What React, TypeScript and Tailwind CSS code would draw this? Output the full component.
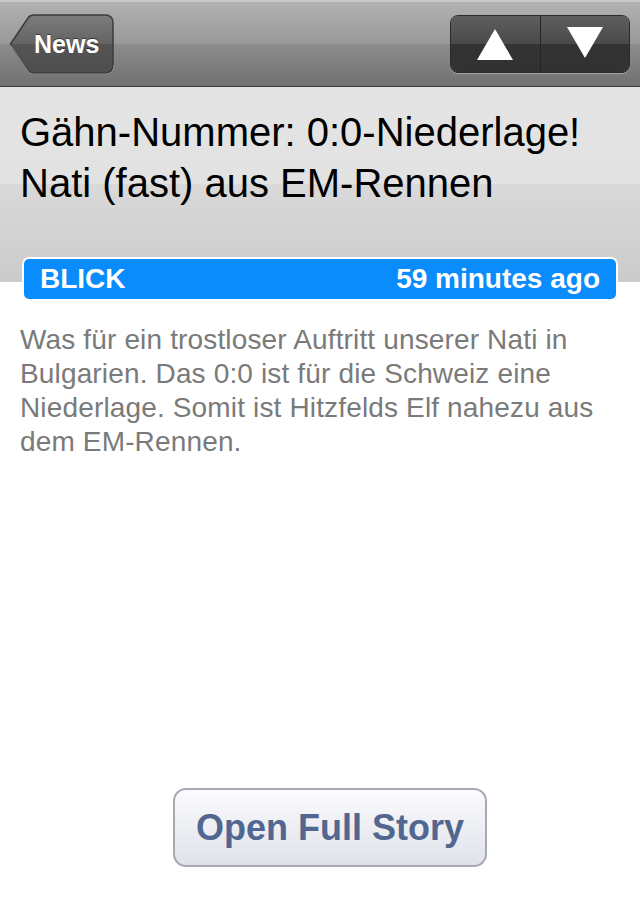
const font = { fontFamily: '"Liberation Sans", Arial, sans-serif' };

function BackButton() {
    return (
        <div className="relative h-[60px] w-[106px]">
            <svg width="106" height="60" viewBox="0 0 106 60" className="absolute inset-0">
                <defs>
                    <linearGradient id="backFill" x1="0" y1="0" x2="0" y2="1">
                        <stop offset="0" stopColor="#7c7c7c" />
                        <stop offset="0.5" stopColor="#636363" />
                        <stop offset="0.5" stopColor="#555555" />
                        <stop offset="1" stopColor="#4e4e4e" />
                    </linearGradient>
                </defs>
                <path
                    d="M1.5 30 L19 4 Q21 1 25 1 L96 1 Q104 1 104 9 L104 51 Q104 59 96 59 L25 59 Q21 59 19 56 Z"
                    fill="url(#backFill)"
                    stroke="#3c3c3c"
                    strokeWidth="1.5"
                />
                <path d="M2 31 L19 57 Q21 60 25 60 L96 60 Q105 60 105 51" fill="none" stroke="#a8a8a8" strokeWidth="1" opacity="0.6" />
            </svg>
            <span className="absolute left-[25px] top-[12px] text-[25px] font-bold text-white [text-shadow:0_-1px_0_rgba(0,0,0,0.5)]" style={font}>
                News
            </span>
        </div>
    );
}

function Arrows() {
    return (
        <div className="flex h-[58px] w-[180px] overflow-hidden rounded-[8px] border border-[#2a2a2a] shadow-[0_1px_0_rgba(255,255,255,0.35)]">
            <div className="flex flex-1 items-center justify-center bg-[linear-gradient(#5e5e5e,#4a4a4a_50%,#333333_50%,#323232)]">
                <svg width="36" height="31" viewBox="0 0 36 31">
                    <path d="M18 0 L36 31 L0 31 Z" fill="#fff" />
                </svg>
            </div>
            <div className="w-px bg-[#232323]" />
            <div className="flex flex-1 items-center justify-center bg-[linear-gradient(#5e5e5e,#4a4a4a_50%,#333333_50%,#323232)]">
                <svg width="36" height="31" viewBox="0 0 36 31" className="-mt-[3px]">
                    <path d="M0 0 L36 0 L18 31 Z" fill="#fff" />
                </svg>
            </div>
        </div>
    );
}

export default function App() {
    return (
        <div className="flex h-[920px] w-[640px] flex-col bg-white" style={font}>
            <div className="flex h-[87px] items-center justify-between border-t-2 border-b border-t-[#c9c9c9] border-b-[#3a3a3a] bg-[linear-gradient(#b1b1b1,#999999_50%,#8c8c8c_50%,#717171)] pl-[9px] pr-[10px]">
                <BackButton />
                <Arrows />
            </div>

            <div className="h-[195px] bg-[linear-gradient(#e4e4e4,#e2e2e2_50%,#d9d9d9_50%,#cbcbcb)] px-5 pt-[20px]">
                <h1 className="text-[40px] leading-[51px] text-black">
                    Gähn-Nummer: 0:0-Niederlage!
                    <br />
                    Nati (fast) aus EM-Rennen
                </h1>
            </div>

            <div className="mx-[22px] -mt-[25px] rounded-[7px] bg-white p-[2px]">
                <div className="flex h-[40px] items-center justify-between rounded-[5px] bg-[#0a8cfc] px-4 text-[28px] font-bold text-white">
                    <span>BLICK</span>
                    <span>59 minutes ago</span>
                </div>
            </div>

            <p className="mt-[22px] px-5 text-[28px] leading-[34px] tracking-[0.15px] text-[#7a7a7a]">
                Was für ein trostloser Auftritt unserer Nati in Bulgarien. Das 0:0 ist für die Schweiz eine Niederlage. Somit ist Hitzfelds Elf nahezu aus dem EM-Rennen.
            </p>

            <div className="mt-auto flex justify-center pb-[53px] pl-5">
                <button className="h-[79px] w-[314px] rounded-[13px] border-2 border-[#a6a9b3] bg-[linear-gradient(#fbfbfd,#dfe2ea)] text-[36px] font-bold text-[#52678f]">
                    Open Full Story
                </button>
            </div>
        </div>
    );
}
